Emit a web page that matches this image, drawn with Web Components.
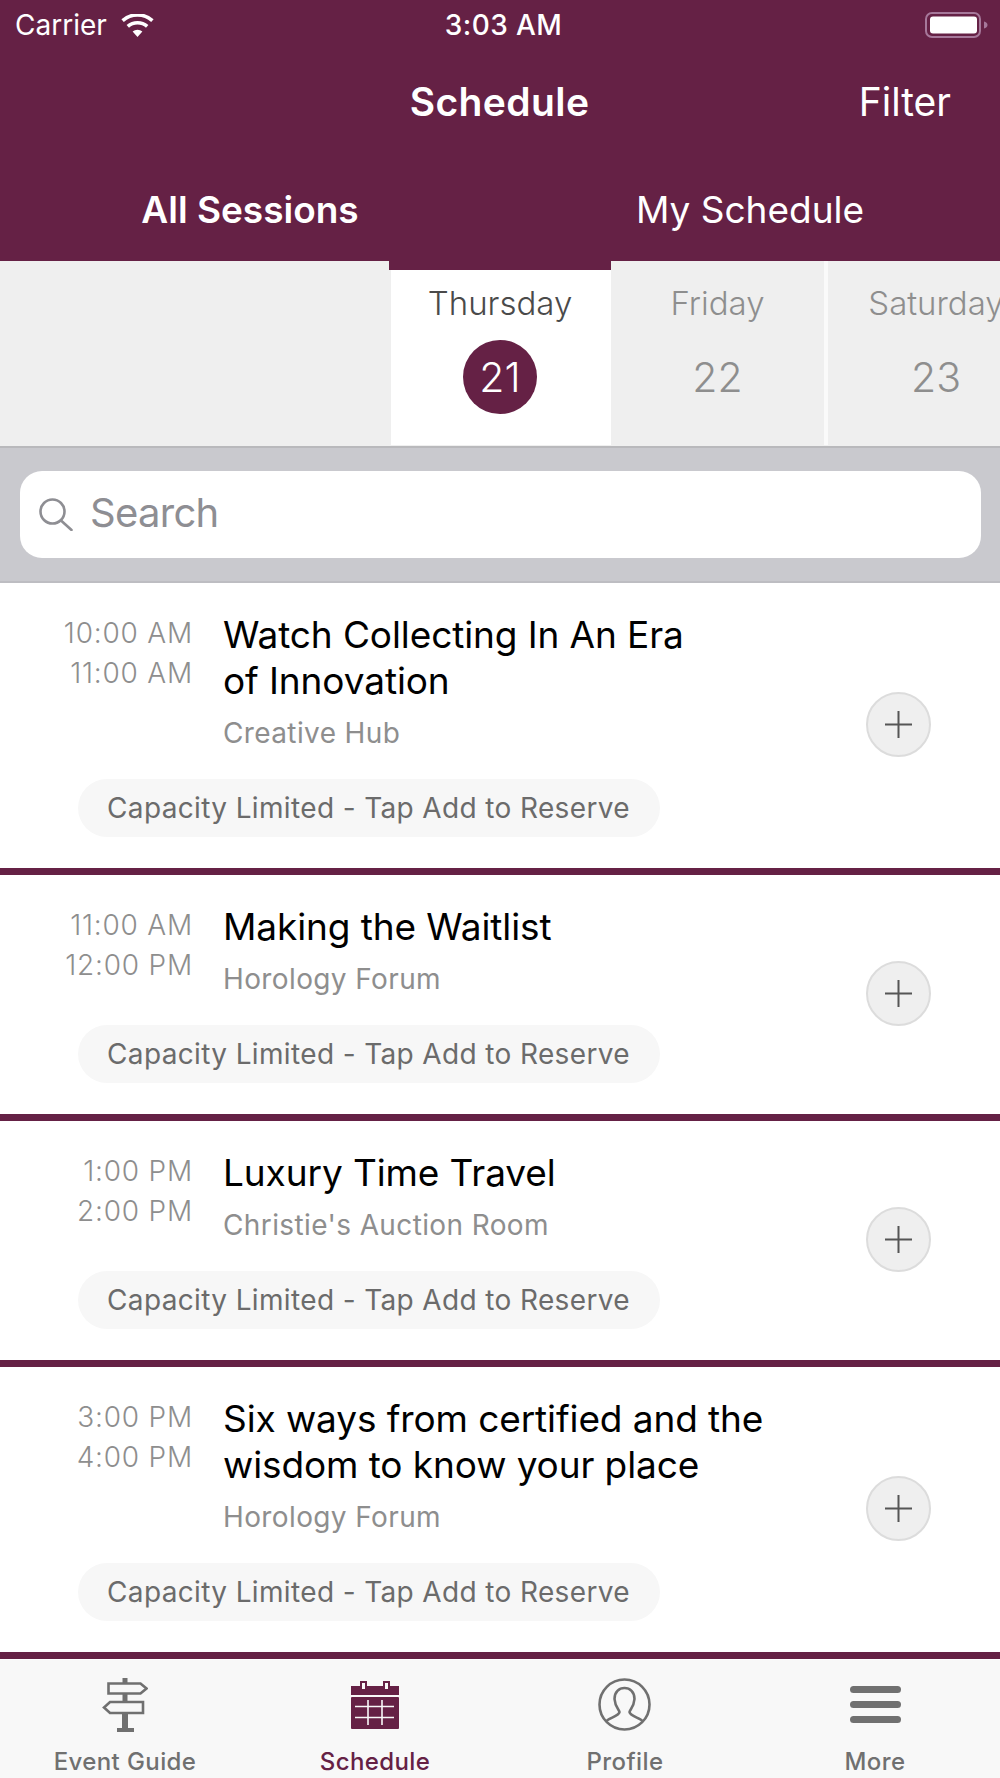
<!DOCTYPE html>
<html>
<head>
<meta charset="utf-8">
<style>
	html, body { margin: 0; padding: 0; background: #fff; }
	body {
		width: 1000px;
		height: 1778px;
		overflow: hidden;
		display: flex;
		flex-direction: column;
		font-family: Inter, "Liberation Sans", sans-serif;
	}
</style>
</head>
<body>
	<status-bar></status-bar>
	<nav-header title-text="Schedule" action="Filter"></nav-header>
	<segment-tabs>
		<span slot="active">All Sessions</span>
		<span slot="other">My Schedule</span>
	</segment-tabs>
	<day-strip>
		<day-cell name="Thursday" num="21" selected></day-cell>
		<day-cell name="Friday" num="22" divider></day-cell>
		<day-cell name="Saturday" num="23"></day-cell>
	</day-strip>
	<search-bar></search-bar>
	<session-list>
		<session-item>
			<span slot="start">10:00 AM</span>
			<span slot="end">11:00 AM</span>
			<span slot="title">Watch Collecting In An Era<br>of Innovation</span>
			<span slot="place">Creative Hub</span>
		</session-item>
		<session-item>
			<span slot="start">11:00 AM</span>
			<span slot="end">12:00 PM</span>
			<span slot="title">Making the Waitlist</span>
			<span slot="place">Horology Forum</span>
		</session-item>
		<session-item>
			<span slot="start">1:00 PM</span>
			<span slot="end">2:00 PM</span>
			<span slot="title">Luxury Time Travel</span>
			<span slot="place">Christie's Auction Room</span>
		</session-item>
		<session-item>
			<span slot="start">3:00 PM</span>
			<span slot="end">4:00 PM</span>
			<span slot="title">Six ways from certified and the<br>wisdom to know your place</span>
			<span slot="place">Horology Forum</span>
		</session-item>
	</session-list>
	<tab-bar>
		<tab-item label="Event Guide" icon="sign"></tab-item>
		<tab-item label="Schedule" icon="calendar" active></tab-item>
		<tab-item label="Profile" icon="profile"></tab-item>
		<tab-item label="More" icon="more"></tab-item>
	</tab-bar>

<script>
(() => {

	const purple = '#652145';
	const font = 'Inter, "Liberation Sans", sans-serif';

	const icons = {
		sign: `
			<svg width="46" height="54" viewBox="0 0 46 54" fill="none" stroke="currentColor" stroke-width="2.6">
				<path d="M6.5 5.5H38.5L44.5 10.5L38.5 15.5H6.5Z"/>
				<path d="M41 24H8L2 29.5L8 35H41Z"/>
				<path d="M23 0V5M23 16V24" stroke-width="5"/>
				<path d="M23 35V50" stroke-width="6"/>
				<rect x="15" y="50" width="17" height="4" fill="currentColor" stroke="none"/>
			</svg>`,
		calendar: `
			<svg width="48" height="48" viewBox="0 0 48 48">
				<path fill="currentColor" d="M0 5H9V0H16V5H32V0H39V5H48V14H0Z"/>
				<rect x="11" y="2" width="3" height="6" fill="#f8f8f8"/>
				<rect x="34" y="2" width="3" height="6" fill="#f8f8f8"/>
				<rect x="0" y="16" width="48" height="32" rx="1" fill="currentColor"/>
				<path stroke="#f8f8f8" stroke-width="1.6" d="M4 25.5H43M4 36.5H43M17 19V44M31 19V44"/>
			</svg>`,
		profile: `
			<svg width="54" height="54" viewBox="0 0 54 54" fill="none" stroke="currentColor" stroke-width="2.6">
				<circle cx="26.5" cy="26.5" r="25"/>
				<path d="M8.5 43C11 40 21 38 21.5 34C21.5 32 17 29 16.5 21C16.5 14 21 10 26.5 10C32 10 36.5 14 36.5 21C36 29 31.5 32 31.5 34C32 38 42 40 44.5 43"/>
			</svg>`,
		more: `
			<svg width="51" height="38" viewBox="0 0 51 38" fill="currentColor">
				<rect x="0" y="0" width="51" height="7" rx="3.5"/>
				<rect x="0" y="15" width="51" height="7" rx="3.5"/>
				<rect x="0" y="30" width="51" height="7" rx="3.5"/>
			</svg>`
	};

	customElements.define('status-bar',
		class StatusBar extends HTMLElement {
			constructor() {
				super();
				this.attachShadow({ mode: 'open' });
				this.shadowRoot.innerHTML = `
					<style>
						:host {
							display: grid;
							grid-template-columns: 1fr auto 1fr;
							align-items: center;
							height: 50px;
							padding: 0 12px 0 15px;
							background: ${purple};
							color: #fff;
							font: 400 28px ${font};
						}
						.left { display: flex; align-items: center; gap: 14px; }
						.time { margin-left: 4px; font-weight: 500; letter-spacing: .4px; }
						.battery { justify-self: end; display: flex; }
					</style>
					<div class="left">
						<span>Carrier</span>
						<svg width="33" height="23" viewBox="0 0 33 23" fill="none" stroke="#fff" stroke-width="3.6">
							<path d="M16.5 23L11.6 17.6A7.4 7.4 0 0 1 21.4 17.6Z" fill="#fff" stroke="none"/>
							<path d="M6.8 12.4A14.5 14.5 0 0 1 26.2 12.4"/>
							<path d="M1.6 6.6A22.4 22.4 0 0 1 31.4 6.6"/>
						</svg>
					</div>
					<span class="time">3:03 AM</span>
					<div class="battery">
						<svg width="63" height="26" viewBox="0 0 63 26">
							<rect x="1" y="1" width="54" height="24" rx="6" fill="none" stroke="#a6789a" stroke-width="2"/>
							<rect x="5" y="4.500" width="47" height="17" rx="3" fill="#fff"/>
							<path d="M59 9.500C61 10 62.500 11 62.500 13C62.500 15 61 16 59 16.500Z" fill="#a6789a"/>
						</svg>
					</div>
				`;
			}
		}
	);

	customElements.define('nav-header',
		class NavHeader extends HTMLElement {
			constructor() {
				super();
				this.attachShadow({ mode: 'open' });
				this.shadowRoot.innerHTML = `
					<style>
						:host {
							display: grid;
							grid-template-columns: 1fr auto 1fr;
							align-items: center;
							height: 104px;
							box-sizing: border-box;
							padding: 0 49px 2px 0;
							background: ${purple};
							color: #fff;
							font: 400 39px ${font};
						}
						.title { font-weight: 600; letter-spacing: .4px; transform: translateX(24px); }
						.action { justify-self: end; }
					</style>
					<span></span>
					<span class="title">${this.getAttribute('title-text')}</span>
					<span class="action">${this.getAttribute('action')}</span>
				`;
			}
		}
	);

	customElements.define('segment-tabs',
		class SegmentTabs extends HTMLElement {
			constructor() {
				super();
				this.attachShadow({ mode: 'open' });
				this.shadowRoot.innerHTML = `
					<style>
						:host {
							display: grid;
							grid-template-columns: 1fr 1fr;
							height: 107px;
							box-sizing: border-box;
							padding-top: 4px;
							background: ${purple};
							color: #fff;
							font: 400 37px ${font};
							text-align: center;
							align-items: center;
						}
						.active { font-weight: 600; }
					</style>
					<div class="active"><slot name="active"></slot></div>
					<div><slot name="other"></slot></div>
				`;
			}
		}
	);

	customElements.define('day-strip',
		class DayStrip extends HTMLElement {
			constructor() {
				super();
				this.attachShadow({ mode: 'open' });
				this.shadowRoot.innerHTML = `
					<style>
						:host {
							display: flex;
							height: 187px;
							box-sizing: border-box;
							padding: 0 0 1px 389px;
							background: #efefef;
							border-bottom: 2px solid #b9b9bc;
							overflow: hidden;
						}
					</style>
					<slot></slot>
				`;
			}
		}
	);

	customElements.define('day-cell',
		class DayCell extends HTMLElement {
			constructor() {
				super();
				this.attachShadow({ mode: 'open' });
				this.shadowRoot.innerHTML = `
					<style>
						:host {
							display: flex;
							flex: none;
							flex-direction: column;
							align-items: center;
							box-sizing: border-box;
							width: 216px;
							padding-top: 20px;
							color: #8e8e8e;
							font: 300 33px ${font};
						}
						:host([selected]) {
							width: 222px;
							background: linear-gradient(${purple} 9px, transparent 9px), linear-gradient(90deg, transparent 2px, #fff 2px);
							color: #4a4a4a;
						}
						:host([divider]) {
							width: 217px;
							border-right: 4px solid #fafafa;
						}
						.name { height: 44px; line-height: 44px; }
						.num {
							display: flex;
							align-items: center;
							justify-content: center;
							width: 74px;
							height: 74px;
							margin-top: 15px;
							border-radius: 50%;
							font-size: 41px;
						}
						:host([selected]) .num { background: ${purple}; color: #fff; }
					</style>
					<span class="name">${this.getAttribute('name')}</span>
					<span class="num">${this.getAttribute('num')}</span>
				`;
			}
		}
	);

	customElements.define('search-bar',
		class SearchBar extends HTMLElement {
			constructor() {
				super();
				this.attachShadow({ mode: 'open' });
				this.shadowRoot.innerHTML = `
					<style>
						:host {
							display: block;
							height: 135px;
							box-sizing: border-box;
							padding: 23px 19px 0 20px;
							background: #c9c9ce;
							border-bottom: 2px solid #bdbdc2;
						}
						.field {
							display: flex;
							align-items: center;
							gap: 17px;
							height: 87px;
							padding-left: 19px;
							background: #fff;
							border-radius: 22px;
							color: #8e8e93;
							font: 400 40px ${font};
							letter-spacing: -.7px;
						}
						.field span { padding-bottom: 4px; }
					</style>
					<div class="field">
						<svg width="34" height="33" viewBox="0 0 34 33" fill="none" stroke="#8e8e93" stroke-width="2.6">
							<circle cx="13.500" cy="13.500" r="12"/>
							<path d="M22 22.500L32.500 32" stroke-linecap="round"/>
						</svg>
						<span>Search</span>
					</div>
				`;
			}
		}
	);

	customElements.define('session-list',
		class SessionList extends HTMLElement {
			constructor() {
				super();
				this.attachShadow({ mode: 'open' });
				this.shadowRoot.innerHTML = `
					<style>
						:host { display: block; flex: 1; min-height: 0; overflow: hidden; background: #fff; }
					</style>
					<slot></slot>
				`;
			}
		}
	);

	customElements.define('session-item',
		class SessionItem extends HTMLElement {
			constructor() {
				super();
				this.attachShadow({ mode: 'open' });
				this.shadowRoot.innerHTML = `
					<style>
						:host {
							display: flex;
							align-items: center;
							box-sizing: border-box;
							padding: 29px 69px 31px 0;
							border-bottom: 7px solid ${purple};
						}
						.main { flex: 1; min-width: 0; }
						.top { display: flex; gap: 30px; }
						.times {
							flex: none;
							width: 193px;
							padding-top: 1px;
							text-align: right;
							color: #8e8e8e;
							font: 300 28px/40px ${font};
							letter-spacing: .8px;
						}
						.times div { height: 40px; }
						.title { color: #000; font: 400 37px/46px ${font}; letter-spacing: -.1px; }
						.place { margin-top: 9px; color: #8e8e8e; font: 400 28px/40px ${font}; letter-spacing: .38px; }
						.pill {
							display: inline-block;
							margin: 26px 0 0 78px;
							padding: 0 30px 0 29px;
							height: 58px;
							background: #f7f7f7;
							border-radius: 29px;
							color: #6b6b6b;
							font: 400 28px/58px ${font};
							letter-spacing: .36px;
						}
						.add {
							flex: none;
							display: flex;
							align-items: center;
							justify-content: center;
							box-sizing: border-box;
							width: 65px;
							height: 65px;
							background: #efefef;
							border: 2px solid #dcdcdc;
							border-radius: 50%;
						}
					</style>
					<div class="main">
						<div class="top">
							<div class="times">
								<div><slot name="start"></slot></div>
								<div><slot name="end"></slot></div>
							</div>
							<div>
								<div class="title"><slot name="title"></slot></div>
								<div class="place"><slot name="place"></slot></div>
							</div>
						</div>
						<div class="pill">Capacity Limited - Tap Add to Reserve</div>
					</div>
					<div class="add">
						<svg width="29" height="29" viewBox="0 0 29 29" stroke="#555" stroke-width="2">
							<path d="M1 14.500H28M14.500 1V28"/>
						</svg>
					</div>
				`;
			}
		}
	);

	customElements.define('tab-bar',
		class TabBar extends HTMLElement {
			constructor() {
				super();
				this.attachShadow({ mode: 'open' });
				this.shadowRoot.innerHTML = `
					<style>
						:host {
							display: grid;
							flex: none;
							grid-template-columns: repeat(4, 1fr);
							height: 118px;
							background: #f8f8f8;
							overflow: hidden;
						}
					</style>
					<slot></slot>
				`;
			}
		}
	);

	customElements.define('tab-item',
		class TabItem extends HTMLElement {
			constructor() {
				super();
				this.attachShadow({ mode: 'open' });
				this.shadowRoot.innerHTML = `
					<style>
						:host {
							display: flex;
							flex-direction: column;
							align-items: center;
							color: #707070;
							font: 500 24px ${font};
							letter-spacing: .4px;
						}
						:host([active]) { color: ${purple}; }
						.icon { display: flex; align-items: center; justify-content: center; height: 54px; margin-top: 18px; }
						.label { margin-top: 15px; line-height: 30px; color: inherit; }
					</style>
					<div class="icon">${icons[this.getAttribute('icon')]}</div>
					<span class="label">${this.getAttribute('label')}</span>
				`;
			}
		}
	);

})();
</script>
</body>
</html>
